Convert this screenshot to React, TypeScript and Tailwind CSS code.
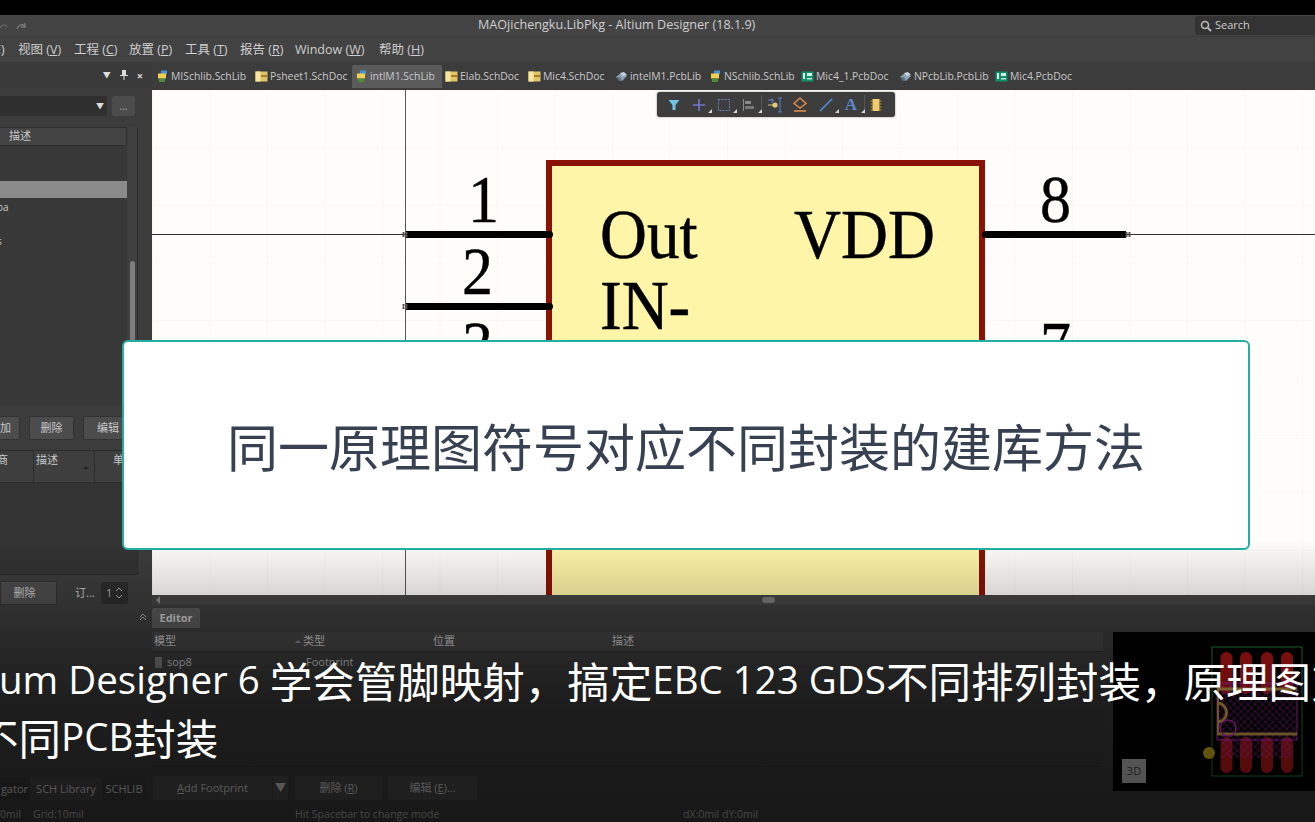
import React from "react";

const ui = "font-['Open_Sans','Noto_Sans_CJK_SC',sans-serif]";

function TabIcon({ kind }: { kind: "sch" | "doc" | "pcb" | "plib" }) {
  if (kind === "sch")
    return (
      <svg width="13" height="13" viewBox="0 0 13 13" className="shrink-0">
        <rect x="5" y="0.5" width="6" height="4" fill="#4a90d0" />
        <rect x="2" y="3.5" width="8" height="5" fill="#f0d050" />
        <rect x="3" y="8.5" width="6" height="3.5" fill="#4f8a3c" />
      </svg>
    );
  if (kind === "doc")
    return (
      <svg width="13" height="11" viewBox="0 0 13 11" className="shrink-0">
        <rect x="0.5" y="0.5" width="12" height="10" fill="#e0c468" />
        <rect x="0.5" y="0.5" width="5" height="10" fill="#f7e6a0" />
        <rect x="6" y="4" width="6" height="2" fill="#a97c28" />
      </svg>
    );
  if (kind === "pcb")
    return (
      <svg width="13" height="11" viewBox="0 0 13 11" className="shrink-0">
        <rect x="0.5" y="0.5" width="12" height="10" fill="#0f8f6c" />
        <rect x="2" y="2" width="2" height="6" fill="#d8efe6" />
        <rect x="6" y="2" width="5" height="3" fill="#d8efe6" />
        <rect x="6" y="7" width="5" height="1.5" fill="#bfe6d8" />
      </svg>
    );
  return (
    <svg width="13" height="12" viewBox="0 0 13 12" className="shrink-0">
      <path d="M1 6 L6 2 L12 5 L7 10 Z" fill="#8fa3b5" />
      <path d="M5 2 L9 1 L12 4 L8 5 Z" fill="#c9d3dc" />
      <path d="M1 6 L4 10 L7 10 L5 6 Z" fill="#5f7285" />
    </svg>
  );
}

const tabs: { n: string; k: "sch" | "doc" | "pcb" | "plib"; w: string; a?: boolean }[] = [
  { n: "MISchlib.SchLib", k: "sch", w: "w-[99px]" },
  { n: "Psheet1.SchDoc", k: "doc", w: "w-[100px]" },
  { n: "intlM1.SchLib", k: "sch", w: "w-[90px]", a: true },
  { n: "Elab.SchDoc", k: "doc", w: "w-[83px]" },
  { n: "Mic4.SchDoc", k: "doc", w: "w-[87px]" },
  { n: "intelM1.PcbLib", k: "plib", w: "w-[94px]" },
  { n: "NSchlib.SchLib", k: "sch", w: "w-[92px]" },
  { n: "Mic4_1.PcbDoc", k: "pcb", w: "w-[98px]" },
  { n: "NPcbLib.PcbLib", k: "plib", w: "w-[96px]" },
  { n: "Mic4.PcbDoc", k: "pcb", w: "w-[84px]" },
];

function Corner() {
  return (
    <span className="absolute right-[-1px] bottom-[1px] w-0 h-0 border-l-[4px] border-l-transparent border-b-[4px] border-b-[#d8d8d8]" />
  );
}

function ToolBtn({ children, corner, w = "w-[25px]" }: { children: React.ReactNode; corner?: boolean; w?: string }) {
  return (
    <div className={`relative ${w} h-[19px] flex items-center justify-center shrink-0`}>
      {children}
      {corner && <Corner />}
    </div>
  );
}

function Toolbar() {
  return (
    <div className="absolute left-[505px] top-[2px] w-[238px] h-[25px] bg-[#3d3d3d] rounded-[3px] flex items-center pl-[4px] shadow-[0_0_2px_rgba(0,0,0,0.5)]">
      <ToolBtn>
        <svg width="12" height="12" viewBox="0 0 12 12"><path d="M0.5 1 H11.5 L7.5 6 V11 H4.5 V6 Z" fill="#6fc4e6" /></svg>
      </ToolBtn>
      <ToolBtn corner>
        <svg width="14" height="14" viewBox="0 0 14 14"><path d="M7 1 V13 M1 7 H13" stroke="#6f78c8" strokeWidth="1.6" /></svg>
      </ToolBtn>
      <ToolBtn corner>
        <svg width="14" height="14" viewBox="0 0 14 14"><rect x="1.5" y="1.5" width="11" height="11" fill="none" stroke="#6d7fae" strokeDasharray="2 1" /></svg>
      </ToolBtn>
      <ToolBtn corner>
        <svg width="14" height="14" viewBox="0 0 14 14"><path d="M1.5 1 V13" stroke="#8a8a8a" /><rect x="3" y="3" width="6" height="3" fill="#8a8a8a" /><rect x="3" y="8" width="9" height="3" fill="#777" /></svg>
      </ToolBtn>
      <div className="w-px h-[19px] bg-[#555] shrink-0" />
      <ToolBtn>
        <svg width="16" height="16" viewBox="0 0 16 16"><path d="M5 1 V6 M1 3 H7" stroke="#6f78c8" /><path d="M1 8 H9" stroke="#c9b87a" /><circle cx="8" cy="8" r="2.6" fill="#e2c97a" /><path d="M13 1 V15 M11 1 H15 M11 15 H15" stroke="#5a7fd0" fill="none" /></svg>
      </ToolBtn>
      <ToolBtn w="w-[26px]">
        <svg width="16" height="16" viewBox="0 0 16 16"><path d="M8 1 L14 6.5 L8 11 L2 6.5 Z" fill="none" stroke="#e08a48" strokeWidth="1.4" /><path d="M2 14 H14" stroke="#e08a48" strokeWidth="1.6" /></svg>
      </ToolBtn>
      <ToolBtn corner>
        <svg width="14" height="14" viewBox="0 0 14 14"><path d="M1 13 L13 1" stroke="#4f8fd8" strokeWidth="1.6" /></svg>
      </ToolBtn>
      <ToolBtn corner w="w-[26px]">
        <span className="font-['Liberation_Serif',serif] font-bold text-[17px] leading-none text-[#5a8ad0]">A</span>
      </ToolBtn>
      <div className="w-px h-[19px] bg-[#555] shrink-0" />
      <ToolBtn w="w-[22px]">
        <svg width="14" height="14" viewBox="0 0 14 14"><rect x="3.5" y="1" width="7" height="12" fill="#f0cd6a" /><path d="M1.5 3 H3.5 M1.5 6 H3.5 M1.5 9 H3.5 M1.5 12 H3.5 M10.5 3 H12.5 M10.5 6 H12.5 M10.5 9 H12.5 M10.5 12 H12.5" stroke="#b78f3a" /></svg>
      </ToolBtn>
    </div>
  );
}

function PinEnd({ cls }: { cls: string }) {
  return (
    <svg width="6" height="5" viewBox="0 0 6 5" className={`absolute ${cls}`}>
      <path d="M0 1 H6 M0 4 H6 M1.5 0 V5 M4.5 0 V5" stroke="#555" strokeWidth="1" />
    </svg>
  );
}

function Canvas() {
  const digit = "absolute font-['Liberation_Serif',serif] text-black leading-none text-[62px] scale-y-[1.09] [-webkit-text-stroke:0.4px_black]";
  const label = "absolute font-['Liberation_Serif',serif] text-black leading-none text-[65px] scale-y-[1.08] [-webkit-text-stroke:0.5px_black]";
  return (
    <div className="relative flex-1 overflow-hidden bg-[#fffdf9] bg-[linear-gradient(to_right,#faf8f3_1px,transparent_1px),linear-gradient(to_bottom,#faf8f3_1px,transparent_1px)] bg-[size:57.5px_57.5px]">
      <Toolbar />
      {/* origin lines */}
      <div className="absolute left-[253px] top-0 bottom-0 w-px bg-[#555]" />
      <div className="absolute left-0 top-[144px] w-full h-px bg-[#333]" />
      {/* component body */}
      <div className="absolute left-[394px] top-[70px] w-[439px] h-[480px] bg-[#fff5a8] border-[6px] border-[#8a1206]" />
      {/* pins */}
      <div className="absolute left-[254px] top-[141px] w-[147px] h-[7px] bg-black rounded-r-full" />
      <div className="absolute left-[254px] top-[213px] w-[147px] h-[7px] bg-black rounded-r-full" />
      <div className="absolute left-[830px] top-[141px] w-[144px] h-[7px] bg-black rounded-l-full" />
      <PinEnd cls="left-[250px] top-[142px]" />
      <PinEnd cls="left-[250px] top-[214px]" />
      <PinEnd cls="left-[973px] top-[142px]" />
      <span className={`${digit} left-[316px] top-[78px]`}>1</span>
      <span className={`${digit} left-[310px] top-[150px]`}>2</span>
      <span className={`${digit} left-[310px] top-[224px]`}>3</span>
      <span className={`${digit} left-[888px] top-[78px]`}>8</span>
      <span className={`${digit} left-[888px] top-[224px]`}>7</span>
      <span className={`${label} left-[448px] top-[112px]`}>Out</span>
      <span className={`${label} left-[642px] top-[112px]`}>VDD</span>
      <span className={`${label} left-[448px] top-[183px]`}>IN-</span>
    </div>
  );
}

function Footprint() {
  const xs = [1226.5, 1246, 1267, 1287];
  return (
    <svg width="202" height="159" viewBox="1113 632 202 159" className="block">
      <defs>
        <pattern id="hatch" width="5" height="5" patternUnits="userSpaceOnUse" patternTransform="rotate(45)">
          <path d="M0 0 H5 M0 0 V5" stroke="#d030d0" strokeWidth="0.9" />
        </pattern>
      </defs>
      <rect x="1212" y="647" width="90" height="129" fill="none" stroke="#2f8a40" />
      {xs.map((x) => (
        <rect key={x} x={x - 6} y="652" width="12" height="42" rx="6" fill="#c01818" />
      ))}
      {xs.map((x) => (
        <rect key={x + 1} x={x - 6} y="737" width="12" height="36" rx="6" fill="#c01818" />
      ))}
      <rect x="1217" y="683" width="80" height="57" fill="url(#hatch)" stroke="#d030d0" />
      <rect x="1222" y="740" width="70" height="18" fill="url(#hatch)" />
      <path d="M1217 689 H1297 M1217 734 H1297" stroke="#e0b050" strokeWidth="3" />
      <path d="M1218 689 V734" stroke="#e0b050" strokeWidth="2" />
      <path d="M1217 703 A9.5 9.5 0 0 1 1217 722" fill="none" stroke="#e0b050" strokeWidth="3" />
      <circle cx="1228" cy="728" r="8" fill="none" stroke="#d030d0" strokeWidth="1.5" />
      <circle cx="1209" cy="753" r="6" fill="#d8b818" />
    </svg>
  );
}

function LeftPanel() {
  const btn = "h-[24px] rounded-[2px] bg-[#4c4c4c] border border-[#333] flex items-center justify-center text-[11px] text-[#c8c8c8] shrink-0";
  return (
    <div className="w-[152px] shrink-0 flex flex-col overflow-hidden bg-[#3c3c3c] text-[#c8c8c8] text-[11px]">
      <div className="h-[26px] flex items-center justify-end gap-[9px] pr-[9px] text-[#ddd] text-[11px] leading-none bg-[#3a3a3a] shrink-0">
        <span className="text-[8px]">▼</span>
        <svg width="8" height="10" viewBox="0 0 8 10"><path d="M2 0 H6 V5 H8 V6 H4.5 V10 H3.5 V6 H0 V5 H2 Z" fill="#ddd" /></svg>
        <span className="font-bold">×</span>
      </div>
      <div className="h-[24px] mt-[6px] flex items-start gap-[5px] pt-[2px] shrink-0">
        <div className="w-[107px] h-[20px] bg-[#2f2f2f] rounded-r-[2px] flex items-center justify-end pr-[3px] text-[8px] text-[#ddd] shrink-0">▼</div>
        <div className="w-[23px] h-[20px] bg-[#4c4c4c] rounded-[2px] flex items-center justify-center text-[#aaa] text-[10px] shrink-0">...</div>
      </div>
      <div className="mt-[9px] h-[278px] w-[138px] border-r border-[#2c2c2c] bg-[#383838] flex shrink-0">
        <div className="w-[127px] flex flex-col shrink-0">
          <div className="h-[19px] bg-[#444] border-y border-r border-[#2e2e2e] flex items-center pl-[9px] shrink-0">描述</div>
          <div className="h-[35px] shrink-0" />
          <div className="h-[17px] bg-[#8a8a8a] shrink-0" />
          <div className="h-[18px] flex items-center text-[10px] whitespace-nowrap -ml-[3px] shrink-0">oa</div>
          <div className="h-[16px] shrink-0" />
          <div className="h-[18px] flex items-center text-[10px] leading-none -ml-[3px] shrink-0">s</div>
        </div>
        <div className="flex-1 bg-[#3f3f3f] flex justify-center pt-[134px]">
          <div className="w-[5px] h-[140px] rounded-full bg-[#7d7d7d]" />
        </div>
      </div>
      <div className="mt-[11px] flex gap-[9px] -ml-[20px] shrink-0">
        <div className={`${btn} w-[40px] justify-end pr-[8px]`}>加</div>
        <div className={`${btn} w-[45px]`}>删除</div>
        <div className={`${btn} w-[50px]`}>编辑</div>
      </div>
      <div className="mt-[10px] h-[125px] w-[138px] border-r border-b border-[#2c2c2c] bg-[#333] flex flex-col shrink-0">
        <div className="h-[33px] bg-[#3e3e3e] border-y border-[#2c2c2c] flex text-[11px] shrink-0">
          <div className="w-[34px] border-r border-[#2c2c2c] pt-[1px] pr-[25px] whitespace-nowrap overflow-hidden flex justify-end">商</div>
          <div className="w-[61px] border-r border-[#2c2c2c] pt-[1px] pl-[2px] relative">
            描述
            <span className="absolute left-[49px] top-[15px] w-0 h-0 border-x-[3px] border-x-transparent border-b-[3px] border-b-[#222]" />
          </div>
          <div className="flex-1 pt-[1px] pl-[18px]">单</div>
        </div>
      </div>
      <div className="mt-[6px] flex items-center shrink-0">
        <div className={`${btn} w-[57px] h-[22px] pr-[8px]`}>删除</div>
        <span className="ml-[18px] w-[26px]">订...</span>
        <div className="w-[27px] h-[22px] bg-[#2c2c2c] rounded-[2px] flex items-center justify-between px-[5px] text-[#bbb]">
          <span>1</span>
          <svg width="8" height="14" viewBox="0 0 8 14"><path d="M1 5 L4 2 L7 5 M1 9 L4 12 L7 9" fill="none" stroke="#aaa" /></svg>
        </div>
      </div>
      <div className="h-[24px] flex items-center justify-end pr-[5px] shrink-0">
        <svg width="8" height="8" viewBox="0 0 8 8"><path d="M1 4 L4 1 L7 4 M1 7 L4 4 L7 7" fill="none" stroke="#aaa" /></svg>
      </div>
      <div className="flex-1" />
      <div className="h-[22px] mb-[3px] flex items-center text-[11px] text-[#c8c8c8] shrink-0">
        <span className="w-[30px] h-full bg-[#353535] flex items-center justify-end pr-[2px] overflow-hidden whitespace-nowrap">gator</span>
        <span className="w-[72px] h-full bg-[#424242] flex items-center justify-center whitespace-nowrap">SCH Library</span>
        <span className="w-[44px] h-full bg-[#383838] flex items-center justify-center">SCHLIB</span>
      </div>
    </div>
  );
}

function Editor() {
  const b = "h-[24px] rounded-[2px] bg-[#484848] flex items-center justify-center text-[11px] text-[#c8c8c8] shrink-0";
  return (
    <div className="h-[198px] flex flex-col bg-[#3c3c3c] text-[11px] text-[#c8c8c8]">
      <div className="h-[23px] shrink-0 flex items-end">
        <div className="w-[48px] h-[20px] bg-[#585858] flex items-center justify-center font-bold text-[11px] rounded-t-[2px]">Editor</div>
      </div>
      <div className="flex flex-1 pt-[4px] min-h-0">
        <div className="w-[951px] shrink-0 flex flex-col">
          <div className="h-[20px] bg-[#444] border-b border-[#2e2e2e] flex items-center shrink-0 relative">
            <span className="w-[151px] pl-[2px]">模型</span>
            <span className="w-[130px]">类型</span>
            <span className="w-[179px]">位置</span>
            <span>描述</span>
            <span className="absolute left-[143px] top-[8px] w-0 h-0 border-x-[3px] border-x-transparent border-b-[3px] border-b-[#888]" />
          </div>
          <div className="h-[18px] mt-[1px] flex items-center pl-[3px] shrink-0">
            <span className="w-[7px] h-[11px] bg-[#777] mr-[5px]" />
            <span className="w-[139px]">sop8</span>
            <span>Footprint</span>
          </div>
          <div className="flex-1 border-b border-[#2e2e2e] bg-[#3a3a3a]" />
          <div className="h-[27px] mt-[9px] flex shrink-0">
            <div className="flex gap-px shrink-0 h-[24px] ml-[1px]">
              <div className={`${b} w-[119px]`}><span className="underline">A</span>dd Footprint</div>
              <div className={`${b} w-[15px] text-[8px]`}>▼</div>
            </div>
            <div className={`${b} w-[87px] ml-[7px]`}>删除 (<u>R</u>)</div>
            <div className={`${b} w-[89px] ml-[6px]`}>编辑 (<u>E</u>)...</div>
          </div>
        </div>
        <div className="ml-[10px] w-[202px] h-[159px] bg-black relative shrink-0">
          <Footprint />
          <div className="absolute left-[9px] top-[127px] w-[24px] h-[24px] bg-[#bbb] text-[#444] text-[11px] flex items-center justify-center">3D</div>
        </div>
      </div>
    </div>
  );
}

export default function App() {
  const latin = "font-['Open_Sans',sans-serif] font-normal text-[38.5px]";
  return (
    <div className={`${ui} relative w-[1315px] h-[822px] overflow-hidden bg-[#3c3c3c] flex flex-col`}>
      <div className="h-[15px] bg-black shrink-0" />
      <div className="h-[22px] bg-[#444] border-b border-[#3a3a3a] flex items-center shrink-0 text-[#cfcfcf]">
        <svg width="30" height="14" viewBox="0 0 30 14" className="shrink-0">
          <path d="M0 9 C2 5 6 5 7 8" stroke="#666" strokeWidth="1.4" fill="none" />
          <path d="M17 10 C19 5 23 5 25 7 M25 4 V8 H21" stroke="#777" strokeWidth="1.4" fill="none" />
        </svg>
        <span className="ml-[448px] text-[12.6px] whitespace-nowrap w-[280px]">MAOjichengku.LibPkg - Altium Designer (18.1.9)</span>
        <div className="ml-auto w-[120px] h-[19px] bg-[#333] rounded-l-[3px] flex items-center gap-[3px] pl-[5px] text-[11px] text-[#ccc]">
          <svg width="12" height="12" viewBox="0 0 12 12"><circle cx="5" cy="5" r="3.5" fill="none" stroke="#bbb" strokeWidth="1.6" /><path d="M8 8 L11 11" stroke="#bbb" strokeWidth="2" /></svg>
          Search
        </div>
      </div>
      <div className="h-[25px] pt-[1px] bg-[#424242] flex items-center text-[12.5px] text-[#cfcfcf] whitespace-nowrap shrink-0">
        <span className="w-[18px] overflow-hidden flex justify-start"><span className="-ml-[6px]">E)</span></span>
        <span className="w-[56px]">视图 (<u>V</u>)</span>
        <span className="w-[55px]">工程 (<u>C</u>)</span>
        <span className="w-[56px]">放置 (<u>P</u>)</span>
        <span className="w-[55px]">工具 (<u>T</u>)</span>
        <span className="w-[55px]">报告 (<u>R</u>)</span>
        <span className="w-[84px]">Window (<u>W</u>)</span>
        <span>帮助 (<u>H</u>)</span>
      </div>
      <div className="flex-1 flex min-h-0">
        <LeftPanel />
        <div className="flex-1 flex flex-col min-w-0">
          <div className="h-[28px] bg-[#3c3c3c] flex items-stretch pl-[1px] pt-[3px] pb-[2px] text-[10.4px] text-[#c8c8c8] whitespace-nowrap shrink-0">
            {tabs.map((t) => (
              <div key={t.n} className={`${t.w} shrink-0 flex items-center gap-[2px] pl-[3px] ${t.a ? "bg-[#5a5a5a] rounded-t-[2px]" : ""}`}>
                <TabIcon kind={t.k} />
                <span>{t.n}</span>
              </div>
            ))}
          </div>
          <Canvas />
          <div className="h-[10px] bg-[#444] flex items-center pl-[4px] shrink-0">
            <span className="w-0 h-0 border-y-[4px] border-y-transparent border-r-[4px] border-r-[#888]" />
            <div className="ml-[602px] w-[13px] h-[6px] rounded-full bg-[#777]" />
          </div>
          <Editor />
        </div>
      </div>
      <div className="h-[19px] pt-[5px] bg-[#3a3a3a] flex items-center text-[10.5px] text-[#aaa] whitespace-nowrap shrink-0">
        <span className="w-[33px] overflow-hidden">0mil</span>
        <span className="w-[262px]">Grid:10mil</span>
        <span className="w-[388px]">Hit Spacebar to change mode</span>
        <span>dX:0mil dY:0mil</span>
      </div>

      {/* video darkening */}
      <div className="absolute left-0 right-0 bottom-0 h-[282px] bg-[linear-gradient(to_bottom,rgba(0,0,0,0),rgba(0,0,0,0.16)_20%,rgba(0,0,0,0.35)_39%,rgba(0,0,0,0.5)_57%,rgba(0,0,0,0.6))]" />

      {/* caption card */}
      <div className="absolute left-[122px] top-[340px] w-[1128px] h-[210px] bg-white border-2 border-[#22aea3] rounded-[6px] flex items-center justify-center">
        <span className="font-['Noto_Sans_CJK_SC',sans-serif] font-normal text-[51px] leading-none text-[#374151] whitespace-nowrap">同一原理图符号对应不同封装的建库方法</span>
      </div>

      {/* subtitle */}
      <div className="absolute left-0 top-[651px] w-[1315px] overflow-hidden text-white text-[42.5px] font-['Noto_Sans_CJK_SC',sans-serif] whitespace-nowrap">
        <div className="-ml-[1px] h-[57px] flex items-center">
          <span className={`${latin} whitespace-pre`}>um Designer 6 </span>
          <span>学会管脚映射，搞定</span>
          <span className={latin}>EBC 123 GDS</span>
          <span>不同排列封装，原理图对应</span>
        </div>
        <div className="-ml-[24px] h-[57px] flex items-center">
          <span>不同</span>
          <span className={latin}>PCB</span>
          <span>封装</span>
        </div>
      </div>
    </div>
  );
}
